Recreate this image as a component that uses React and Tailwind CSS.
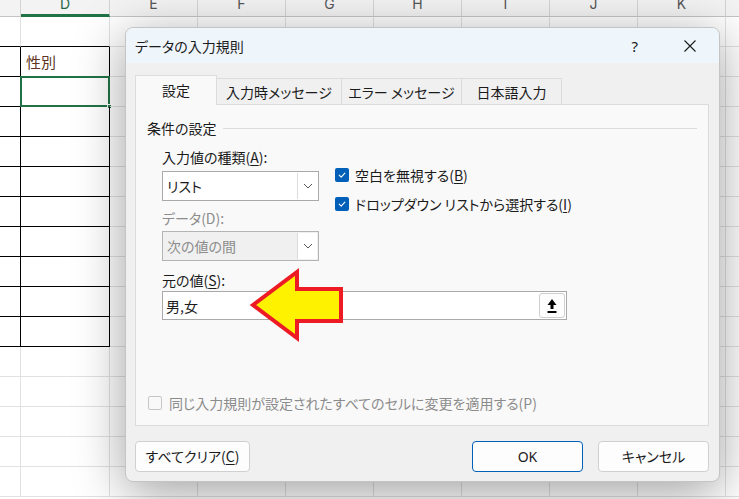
import React from "react";

const F = "[font-family:'Noto_Sans_CJK_JP','Noto_Sans',sans-serif] [font-feature-settings:'palt']";

const letters = ["C", "D", "E", "F", "G", "H", "I", "J", "K", "L"];

function Sheet() {
  const rows = Array.from({ length: 16 }, (_, i) => i);
  return (
    <div className="absolute inset-0 bg-white">
      <div className="grid grid-cols-[21px_89px_repeat(8,88px)_1fr] h-[17px] bg-[#f3f3f3]">
        {letters.map((l, c) => (
          <div
            key={l}
            className={
              "relative flex justify-center overflow-hidden border-r border-[#d4d4d4] " +
              (c === 1 ? "border-b-[3px] border-b-[#217346]" : "border-b border-b-[#c4c4c4]")
            }
          >
            <span
              className={
                "[font-family:Inter,'Noto_Sans',sans-serif] text-[14px] leading-[14px] -mt-[3px] " +
                (c === 1 ? "text-[#1f6b46]" : "text-[#555]")
              }
            >
              {c === 0 ? "" : l}
            </span>
          </div>
        ))}
      </div>
      {rows.map((r) => (
        <div key={r} className="grid grid-cols-[21px_89px_repeat(8,88px)_1fr] h-[30px]">
          {letters.map((l, c) => {
            const t = c <= 1;
            const bb = t && r <= 10 ? "border-b-black" : "border-b-[#e1e1e1]";
            const br = t && r >= 1 && r <= 10 ? "border-r-black" : "border-r-[#e1e1e1]";
            return (
              <div key={l} className={"relative border-b border-r " + bb + " " + br}>
                {r === 1 && c === 1 && (
                  <span className={F + " absolute left-[5px] top-[5px] text-[15px] leading-[20px] text-[#5e3522]"}>
                    性別
                  </span>
                )}
                {r === 2 && c === 1 && (
                  <>
                    <div className="absolute -left-px -top-px right-[-1px] bottom-[-1px] border-2 border-[#217346]" />
                    <div className="absolute right-[-3px] bottom-[-3px] w-[5px] h-[5px] bg-[#217346] border border-white" />
                  </>
                )}
              </div>
            );
          })}
        </div>
      ))}
    </div>
  );
}

function Check() {
  return (
    <div className="w-[14px] h-[14px] rounded-[2px] bg-[#005fb8] flex items-center justify-center">
      <svg width="10" height="10" viewBox="0 0 10 10">
        <path d="M2.2 5.2 L4.2 7.1 L7.9 3.1" fill="none" stroke="white" strokeWidth="1.1" strokeLinecap="round" strokeLinejoin="round" />
      </svg>
    </div>
  );
}

function Chevron({ color = "#555" }) {
  return (
    <svg width="10" height="6" viewBox="0 0 10 6">
      <path d="M1 1 L5 5 L9 1" fill="none" stroke={color} strokeWidth="1" />
    </svg>
  );
}

function U({ children }) {
  return <span className="underline underline-offset-[2px] decoration-[1px]">{children}</span>;
}

function Dialog() {
  return (
    <div
      className={
        F +
        " absolute left-[125px] top-[27px] w-[595px] h-[455px] rounded-[8px] bg-[#f0f0f0] border border-[#c4c4c4] shadow-[0_10px_50px_rgba(0,0,0,0.38)] flex flex-col overflow-hidden text-[14px] text-[#1b1b1b]"
      }
    >
      <div className="h-[35px] shrink-0 bg-[#eef5fb] flex items-center pl-[9px] leading-[20px]">
        <span className="text-[14px]">データの入力規則</span>
        <span className="ml-auto mr-[46px] text-[15px] [font-family:'Noto_Sans',sans-serif]">?</span>
        <svg width="12" height="12" viewBox="0 0 12 12" className="mr-[23px]">
          <path d="M0.5 0.5 L11.5 11.5 M11.5 0.5 L0.5 11.5" stroke="#1b1b1b" strokeWidth="1.1" />
        </svg>
      </div>
      <div className="flex flex-col pl-[9px] pr-[10px]">
        <div className="mt-[12px] flex items-end h-[30px] -mb-px relative z-10">
          <div className="w-[82px] h-[30px] bg-[#f9f9f9] border border-b-0 border-[#dcdcdc] flex items-center justify-center">
            設定
          </div>
          <div className="w-[125px] h-[27px] border border-l-0 border-b-0 border-[#dcdcdc] flex items-center justify-center">
            入力時メッセージ
          </div>
          <div className="w-[120px] h-[27px] border border-l-0 border-b-0 border-[#dcdcdc] flex items-center justify-center">
            エラー メッセージ
          </div>
          <div className="w-[100px] h-[27px] border border-l-0 border-b-0 border-[#dcdcdc] flex items-center justify-center">
            日本語入力
          </div>
        </div>
        <div className="h-[322px] bg-[#f9f9f9] border border-[#dcdcdc] flex flex-col leading-[20px]">
          <div className="mt-[13px] flex items-center pl-[11px] pr-[11px]">
            <span>条件の設定</span>
            <div className="flex-1 h-px bg-[#dcdcdc] ml-[6px]" />
          </div>
          <div className="flex pl-[26px]">
            <div className="flex flex-col w-[157px]">
              <div className="mt-[9px]">
                入力値の種類(<U>A</U>):
              </div>
              <div className="mt-[4px] h-[30px] bg-white border border-[#a9a9a9] flex items-stretch">
                <div className="flex-1 pl-[4px] flex items-center">リスト</div>
                <div className="w-[20px] m-px ml-0 border-l border-[#dcdcdc] flex items-center justify-center">
                  <Chevron />
                </div>
              </div>
              <div className="mt-[7px] text-[#8c8c8c]">データ(D):</div>
              <div className="mt-[3px] h-[30px] bg-[#f0f0f0] border border-[#b4b4b4] flex items-stretch">
                <div className="flex-1 pl-[4px] flex items-center text-[#8c8c8c]">次の値の間</div>
                <div className="w-[20px] m-px ml-0 bg-white border-l border-[#dcdcdc] flex items-center justify-center">
                  <Chevron />
                </div>
              </div>
            </div>
            <div className="ml-[16px] pt-[27px] flex flex-col gap-[9px]">
              <div className="flex items-center h-[20px]">
                <Check />
                <span className="ml-[6px]">
                  空白を無視する(<U>B</U>)
                </span>
              </div>
              <div className="flex items-center h-[20px]">
                <Check />
                <span className="ml-[6px]">
                  ドロップダウン リストから選択する(<U>I</U>)
                </span>
              </div>
            </div>
          </div>
          <div className="pl-[26px] mt-[9px]">
            元の値(<U>S</U>):
          </div>
          <div className="ml-[26px] mt-px w-[405px] h-[29px] bg-white border border-[#a9a9a9] flex items-center">
            <span className="pl-[3px] flex-1">男,女</span>
            <div className="mr-px w-[26px] h-[25px] rounded-[3px] border border-[#cfcfcf] bg-[#fdfdfd] flex items-center justify-center">
              <svg width="10" height="16" viewBox="0 0 10 16">
                <path d="M5 1 L9.5 7 L6.5 7 L6.5 11 L3.5 11 L3.5 7 L0.5 7 Z" fill="#000" />
                <rect x="0.5" y="13" width="9" height="2" fill="#000" />
              </svg>
            </div>
          </div>
          <div className="mt-auto mb-[12px] pl-[12px] flex items-center text-[#8c8c8c]">
            <div className="w-[14px] h-[14px] rounded-[2px] border border-[#c6c6c6] bg-[#f9f9f9]" />
            <span className="ml-[7px]">同じ入力規則が設定されたすべてのセルに変更を適用する(P)</span>
          </div>
        </div>
        <div className="mt-[15px] flex items-center h-[31px]">
          <div className="w-[115px] h-[31px] rounded-[4px] border border-[#d0d0d0] bg-[#fdfdfd] flex items-center justify-center">
            すべてクリア(<U>C</U>)
          </div>
          <div className="ml-auto w-[111px] h-[31px] rounded-[4px] border border-[#005fb8] bg-[#fdfdfd] flex items-center justify-center [font-family:'Noto_Sans',sans-serif]">
            OK
          </div>
          <div className="ml-[15px] w-[111px] h-[31px] rounded-[4px] border border-[#d0d0d0] bg-[#fdfdfd] flex items-center justify-center">
            キャンセル
          </div>
        </div>
      </div>
    </div>
  );
}

function Arrow() {
  return (
    <svg className="absolute left-0 top-0 pointer-events-none" width="739" height="499">
      <polygon
        points="253,305 297,272 297,289 341,289 341,321 297,321 297,338"
        fill="#fff200"
        stroke="#ed1c24"
        strokeWidth="4"
        strokeLinejoin="miter"
      />
    </svg>
  );
}

export default function App() {
  return (
    <div className="relative w-[739px] h-[499px] overflow-hidden bg-white">
      <Sheet />
      <Dialog />
      <Arrow />
    </div>
  );
}
